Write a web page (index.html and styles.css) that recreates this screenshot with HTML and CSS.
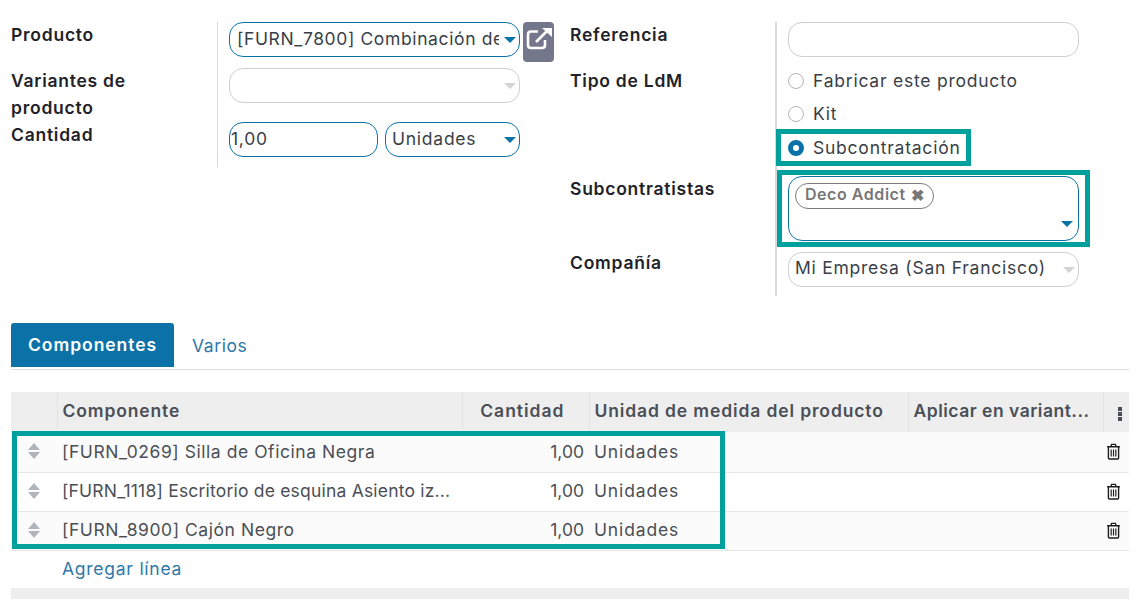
FILE: index.html
```html
<!DOCTYPE html>
<html lang="es">
<head>
    <meta charset="UTF-8">
    <title>Lista de materiales</title>
    <link rel="stylesheet" href="styles.css">
</head>
<body>
    <div class="form">
        <div class="group">
            <div class="labels">
                <div class="label row-a">Producto</div>
                <div class="label row-b">Variantes de producto</div>
                <div class="label row-c">Cantidad</div>
            </div>
            <div class="fields">
                <div class="row-a line">
                    <div class="input active wide"><span class="clip">[FURN_7800] Combinación de la mesa</span><i class="caret"></i></div>
                    <a class="open-btn">
                        <svg width="31" height="40" viewBox="0 0 31 40" fill="none" stroke="#fff" stroke-width="2.6">
                            <path d="M15 9.500H8Q5 9.500 5 12.500V23Q5 26 8 26H19Q22 26 22 23V18"/>
                            <path d="M13 20L24 9"/>
                            <path d="M19 6H29V15Z" fill="#fff" stroke="none"/>
                        </svg>
                    </a>
                </div>
                <div class="row-b"><div class="input wide"><i class="caret muted"></i></div></div>
                <div class="row-c line qty">
                    <div class="input active amount">1,00</div>
                    <div class="input active unit">Unidades<i class="caret"></i></div>
                </div>
            </div>
        </div>
        <div class="group right">
            <div class="labels">
                <div class="label row-a">Referencia</div>
                <div class="label row-d">Tipo de LdM</div>
                <div class="label row-e">Subcontratistas</div>
                <div class="label row-f">Compañía</div>
            </div>
            <div class="fields">
                <div class="row-a"><div class="input wide"></div></div>
                <div class="row-d radios">
                    <div class="radio"><i class="dot"></i>Fabricar este producto</div>
                    <div class="radio"><i class="dot"></i>Kit</div>
                    <div class="radio mark-radio"><i class="dot on"></i>Subcontratación</div>
                </div>
                <div class="row-e">
                    <div class="input active tags mark-tags">
                        <span class="tag">Deco Addict <b>✖</b></span>
                        <i class="caret"></i>
                    </div>
                </div>
                <div class="row-f"><div class="input wide company">Mi Empresa (San Francisco)<i class="caret muted"></i></div></div>
            </div>
        </div>
    </div>

    <div class="tabs">
        <a class="tab current">Componentes</a>
        <a class="tab">Varios</a>
    </div>

    <div class="list">
        <table>
            <colgroup>
                <col class="c-handle"><col class="c-name"><col class="c-qty"><col class="c-uom"><col class="c-var"><col class="c-end">
            </colgroup>
            <thead>
                <tr>
                    <th></th>
                    <th>Componente</th>
                    <th class="num">Cantidad</th>
                    <th>Unidad de medida del producto</th>
                    <th class="short">Aplicar en variant...</th>
                    <th class="end"><span class="dots"><i></i><i></i><i></i></span></th>
                </tr>
            </thead>
            <tbody>
                <tr>
                    <td><span class="handle"></span></td>
                    <td>[FURN_0269] Silla de Oficina Negra</td>
                    <td class="num">1,00</td>
                    <td class="uom">Unidades</td>
                    <td></td>
                    <td class="end"><svg class="trash" viewBox="0 0 14 16"><use href="#trash"/></svg></td>
                </tr>
                <tr>
                    <td><span class="handle"></span></td>
                    <td class="long">[FURN_1118] Escritorio de esquina Asiento iz...</td>
                    <td class="num">1,00</td>
                    <td class="uom">Unidades</td>
                    <td></td>
                    <td class="end"><svg class="trash" viewBox="0 0 14 16"><use href="#trash"/></svg></td>
                </tr>
                <tr>
                    <td><span class="handle"></span></td>
                    <td>[FURN_8900] Cajón Negro</td>
                    <td class="num">1,00</td>
                    <td class="uom">Unidades</td>
                    <td></td>
                    <td class="end"><svg class="trash" viewBox="0 0 14 16"><use href="#trash"/></svg></td>
                </tr>
                <tr class="add">
                    <td></td>
                    <td colspan="5"><a>Agregar línea</a></td>
                </tr>
            </tbody>
        </table>
        <div class="foot"></div>
        <div class="mark-rows"></div>
    </div>

    <svg class="defs" width="0" height="0">
        <symbol id="trash" viewBox="0 0 14 16">
            <path d="M1 3.500H13M2.200 3.500V14Q2.200 15 3.200 15H10.800Q11.800 15 11.800 14V3.500M4.500 3.500L5.200 1.300H8.800L9.500 3.500" fill="none" stroke="#1d1d1d" stroke-width="1.300"/>
            <path d="M4.800 6V12.800M7 6V12.800M9.200 6V12.800" fill="none" stroke="#1d1d1d" stroke-width="1.100"/>
        </symbol>
    </svg>
</body>
</html>
```

FILE: styles.css
```css
body{
    margin: 0;
    padding: 22px 8px 0 11px;
    background-color: #fff;
    color: #3a3f47;
    font-family: Inter, "Liberation Sans", sans-serif;
    font-size: 17.5px;
    line-height: 27px;
    overflow: hidden;
}

/* form */
.form{
    display: flex;
    height: 301px;
}
.group{
    display: flex;
    width: 559px;
}
.labels{
    box-sizing: border-box;
    width: 207px;
    padding-right: 40px;
    flex: none;
    border-right: 1px solid #d9d9d9;
}
.right .labels{
    border-right-width: 2px;
}
.labels .label:first-child{
    margin-top: -1px;
}
.fields{
    padding-left: 11px;
}
.label{
    color: #1f2329;
    font-weight: 600;
    letter-spacing: .75px;
}
.row-a{ height: 46px; }
.row-b{ height: 54px; }
.row-c{ height: 45px; }
.row-d{ height: 108px; }
.row-e{ height: 74px; }
.row-f{ height: 46px; }
.row-f .input{ margin-top: 2px; }
.line{
    display: flex;
}
.qty{
    gap: 7px;
}
.group:first-child .labels{ height: 145px; }
.right .labels{ height: 274px; }

.input{
    position: relative;
    box-sizing: border-box;
    height: 35px;
    padding: 2px 20px 0 7px;
    border: 1px solid #cfcfcf;
    border-radius: 14px;
    white-space: nowrap;
    letter-spacing: .75px;
}
.input.active{
    border-color: #0b72a8;
}
.wide{ width: 291px; }
.amount{ width: 149px; padding-left: 1px; }
.unit{ width: 135px; padding-left: 6px; }
.company{ padding: 1px 20px 0 6px; }
.clip{
    display: block;
    overflow: hidden;
    letter-spacing: .62px;
}
.caret{
    position: absolute;
    top: 14px;
    right: 3px;
    border-top: 6px solid #0b72a8;
    border-left: 6px solid transparent;
    border-right: 6px solid transparent;
}
.caret.muted{
    border-top-color: #d4d4d4;
}
.open-btn{
    display: block;
    width: 31px;
    height: 40px;
    margin-left: 3px;
    border-radius: 4px;
    background-color: #74778c;
}

/* radios */
.radios{
    display: flex;
    flex-direction: column;
    gap: 6px;
}
.radio{
    display: flex;
    align-items: center;
    gap: 9px;
    letter-spacing: .77px;
}
.radio:first-child{
    margin-top: -1px;
}
.dot{
    box-sizing: border-box;
    width: 16px;
    height: 16px;
    border: 1px solid #b5b5b5;
    border-radius: 50%;
}
.dot.on{
    border: 5px solid #0b72a8;
}

/* many2many tags */
.tags{
    width: 291px;
    height: 65px;
    padding: 3px 6px;
}
.tag{
    display: inline-flex;
    align-items: center;
    gap: 5px;
    box-sizing: border-box;
    width: 139px;
    height: 26px;
    padding: 0 0 2px 9px;
    border: 1px solid #7b7b7b;
    border-radius: 13px;
    color: #777;
    font-size: 16px;
    font-weight: 600;
    letter-spacing: .55px;
}
.tag b{
    font-size: 16px;
    line-height: 1;
}
.tags .caret{
    top: 44px;
    right: 5px;
}

/* annotations */
.mark-radio::after,
.mark-tags::after,
.mark-rows{
    content: "";
    position: absolute;
    box-sizing: border-box;
    border: 5px solid #00a09d;
    pointer-events: none;
}
.mark-radio{
    position: relative;
    margin-top: 1px;
}
.mark-radio::after{
    top: -5px;
    left: -12px;
    width: 195px;
    height: 37px;
}
.mark-tags::after{
    top: -7px;
    left: -12px;
    width: 313px;
    height: 77px;
}

/* tabs */
.tabs{
    display: flex;
    height: 46px;
    border-bottom: 1px solid #dedede;
}
.tab{
    padding: 9px 18px 0;
    color: #2d78a8;
    letter-spacing: .6px;
}
.tab.current{
    box-sizing: border-box;
    width: 163px;
    height: 44px;
    padding: 8px 0 0 17px;
    border-radius: 3px 3px 0 0;
    background-color: #0b72a8;
    color: #fff;
    font-weight: 600;
    letter-spacing: .95px;
}

/* list */
.list{
    position: relative;
    width: 1118px;
    margin-top: 22px;
}
table{
    width: 100%;
    border-collapse: collapse;
    table-layout: fixed;
}
.c-handle{ width: 46px; }
.c-name{ width: 405px; }
.c-qty{ width: 127px; }
.c-uom{ width: 319px; }
.c-var{ width: 195px; }
th{
    height: 40px;
    padding: 0 5px 4px;
    border-left: 1px solid #e2e2e2;
    background-color: #eee;
    color: #4a4f57;
    font-weight: 600;
    text-align: left;
    white-space: nowrap;
    letter-spacing: .87px;
    box-sizing: border-box;
}
th:first-child{ border-left: 0; }
th.num{
    padding-right: 24px;
    letter-spacing: 1px;
}
th.short{
    letter-spacing: .5px;
}
td{
    height: 39px;
    padding: 0 5px 2px;
    border-bottom: 1px solid #e6e6e6;
    color: #4b4f55;
    white-space: nowrap;
    letter-spacing: .55px;
    box-sizing: border-box;
}
td.long{
    letter-spacing: .2px;
}
td.uom{
    letter-spacing: .85px;
}
td.num{
    letter-spacing: 0;
}
tbody tr:nth-child(odd) td{
    background-color: #fbfbfb;
}
tbody tr:first-child td{
    height: 40px;
    padding-bottom: 1px;
}
.num{
    text-align: right;
}
.end{
    padding: 0;
    text-align: center;
}
.add td{
    height: 38px;
    border-bottom: 0;
    background-color: #fff !important;
}
.add a{
    color: #2d78a8;
    letter-spacing: .75px;
}
.handle{
    display: block;
    position: relative;
    width: 12px;
    height: 16px;
    margin-left: 12px;
}
.handle::before,
.handle::after{
    content: "";
    position: absolute;
    left: 0;
    border-left: 6px solid transparent;
    border-right: 6px solid transparent;
}
.handle::before{
    top: 0;
    border-bottom: 7px solid #b0b5bd;
}
.handle::after{
    bottom: 0;
    border-top: 7px solid #b0b5bd;
}
.dots{
    display: inline-flex;
    flex-direction: column;
    gap: 1px;
    margin-left: 8px;
    vertical-align: middle;
}
.dots i{
    width: 4px;
    height: 4px;
    background-color: #4a4f57;
}
.trash{
    display: block;
    width: 15px;
    height: 17px;
    margin: 0 auto 0 3px;
}
.foot{
    height: 11px;
    background-color: #eee;
}
.mark-rows{
    top: 39px;
    left: 1px;
    width: 713px;
    height: 118px;
}
.defs{
    position: absolute;
}
```
